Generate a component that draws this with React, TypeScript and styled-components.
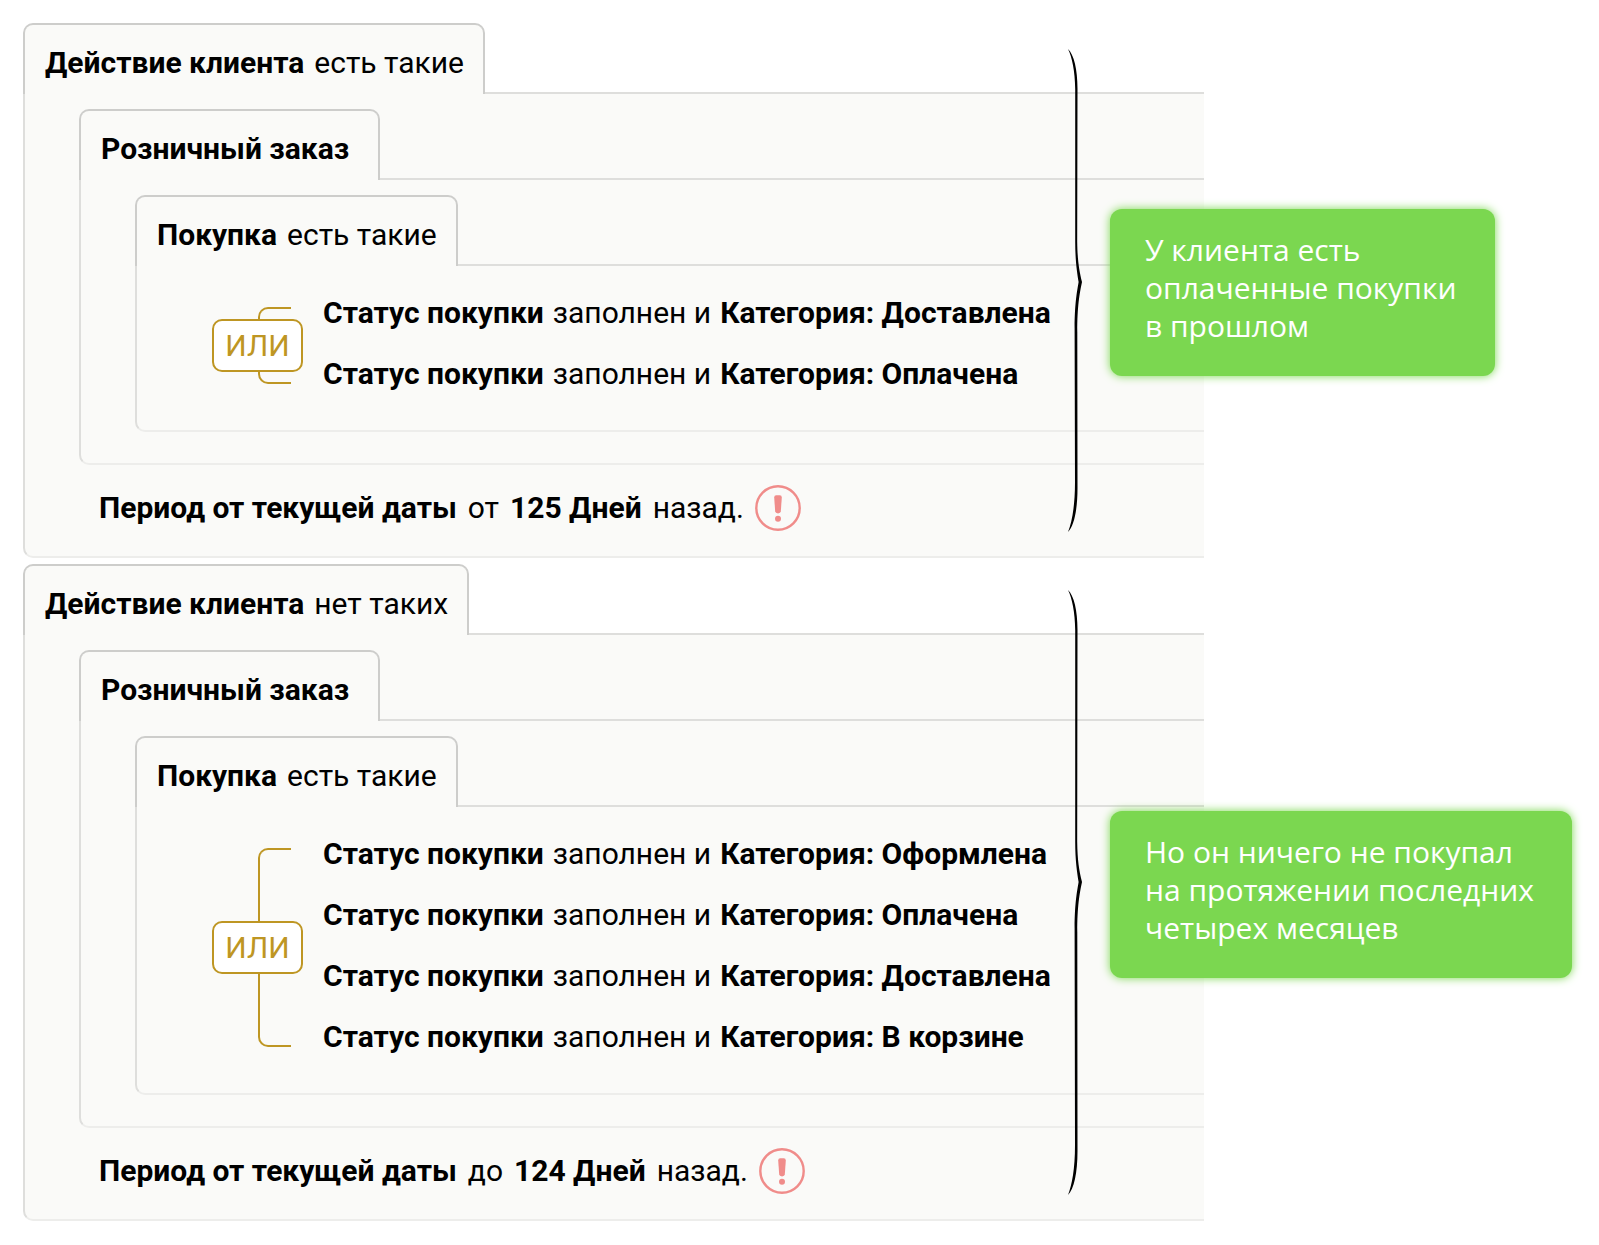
import React from "react";
import styled, { createGlobalStyle } from "styled-components";

const GlobalStyle = createGlobalStyle`
  *, *::before, *::after { box-sizing: border-box; }
  body {
    margin: 0;
    background: #fff;
    color: #000;
    font-family: Roboto, "Noto Sans", sans-serif;
    font-size: 30px;
    line-height: 38px;
  }
`;

const Page = styled.main`
  display: flex;
  flex-direction: column;
  gap: 6px;
  padding: 23px 0 24px 23px;
`;

const Section = styled.section`
  display: grid;
  grid-template-columns: minmax(0, 1fr) 136px 395px;
`;

const Panel = styled.div`
  grid-area: 1 / 1 / 2 / 3;
  min-width: 0;
`;

const Annotation = styled.aside`
  grid-area: 1 / 2 / 2 / 4;
  z-index: 2;
  display: flex;
  align-items: center;
  gap: 26px;
`;

const BraceSvg = styled.svg`
  flex: none;
  display: block;
  width: 16px;
  height: calc(100% - 52px);
`;

const Callout = styled.p`
  margin: 4px 0 0;
  padding: 22px 38px 31px 35px;
  border-radius: 12px;
  background: #7bd750;
  box-shadow: 0 0 10px #7bd750;
  color: #fff;
  font-family: "Open Sans", "Noto Sans", sans-serif;
  white-space: nowrap;
`;

const Tab = styled.header`
  position: relative;
  z-index: 1;
  display: flex;
  align-items: center;
  gap: 10px;
  width: fit-content;
  height: 71px;
  margin-bottom: -2px;
  padding: 6px 19px 0 20px;
  border: 2px solid #cdcdcb;
  border-bottom: 0;
  border-radius: 10px 10px 0 0;
  background: #fafaf8;
  white-space: nowrap;
`;

const Body = styled.div<{ $bottom: number }>`
  padding: 15px 0 ${p => p.$bottom}px 54px;
  border: solid #dededc;
  border-width: 2px 0 2px 2px;
  border-bottom-color: #ededeb;
  border-bottom-left-radius: 10px;
  background: #fafaf8;
`;

const Conditions = styled.div`
  display: flex;
  gap: 20px;
  padding: 2px 0 0 21px;
`;

const Connector = styled.div`
  display: grid;
  flex: none;
  width: 91px;
  padding: 24px 0 21px;
`;

const Bracket = styled.span`
  grid-area: 1 / 1;
  width: 33px;
  margin-left: 46px;
  border: solid #be9623;
  border-width: 2px 0 2px 2px;
  border-radius: 10px 0 0 10px;
`;

const Operator = styled.button`
  grid-area: 1 / 1;
  align-self: center;
  height: 53px;
  margin: -20px 0;
  padding: 0;
  border: 2px solid #be9623;
  border-radius: 10px;
  background: #fff;
  color: #be9623;
  font: inherit;
`;

const List = styled.ul`
  margin: 0;
  padding: 0;
  list-style: none;
`;

const Phrase = styled.li`
  display: flex;
  align-items: center;
  gap: 9px;
  height: 61px;
  padding-bottom: 2px;
  white-space: nowrap;
`;

const Period = styled.div`
  display: flex;
  align-items: center;
  gap: 11px;
  height: 86px;
  padding-left: 20px;
  white-space: nowrap;
`;

const WarningSvg = styled.svg`
  flex: none;
  width: 46px;
  height: 46px;
`;

function Warning() {
  return (
    <WarningSvg viewBox="0 0 46 46" role="img" aria-label="Внимание">
      <circle cx="23" cy="23" r="21.7" fill="none" stroke="#f08c8a" strokeWidth="2.4" />
      <path d="M19.2 12.6Q19.2 10.2 21.2 10.2H24.8Q26.8 10.2 26.8 12.6L25.8 26.6Q25.6 28.4 23 28.4Q20.4 28.4 20.2 26.6Z" fill="#f08c8a" />
      <circle cx="23" cy="33.8" r="3" fill="#f08c8a" />
    </WarningSvg>
  );
}

function Brace({ height: h }: { height: number }) {
  const t = Math.round(h * 0.483);
  const d = [
    `M0 0C6 6 9.5 20 9.5 40L9.2 ${t - 40}C9.5 ${t - 22} 11 ${t - 12} 14 ${t}`,
    `C11.5 ${t + 12} 9.3 ${t + 24} 9.3 ${t + 50}L9.5 ${h - 44}C9.5 ${h - 22} 6 ${h - 6} 0 ${h}`,
    `C4 ${h - 10} 7 ${h - 26} 7 ${h - 50}L6.6 ${t + 46}C6.8 ${t + 20} 9 ${t + 10} 10.6 ${t}`,
    `C9 ${t - 10} 7.2 ${t - 22} 7.2 ${t - 40}L7.2 40C7 22 4 8 0 0Z`,
  ].join("");
  return (
    <BraceSvg viewBox={`0 0 16 ${h}`} preserveAspectRatio="none" aria-hidden="true">
      <path d={d} />
    </BraceSvg>
  );
}

interface Rule {
  match: string;
  statuses: string[];
  preposition: string;
  days: string;
  note: string[];
  braceHeight: number;
}

const rules: Rule[] = [
  {
    match: "есть такие",
    statuses: ["Доставлена", "Оплачена"],
    preposition: "от",
    days: "125 Дней",
    note: ["У клиента есть", "оплаченные покупки", "в прошлом"],
    braceHeight: 483,
  },
  {
    match: "нет таких",
    statuses: ["Оформлена", "Оплачена", "Доставлена", "В корзине"],
    preposition: "до",
    days: "124 Дней",
    note: ["Но он ничего не покупал", "на протяжении последних", "четырех месяцев"],
    braceHeight: 605,
  },
];

function RuleSection({ rule }: { rule: Rule }) {
  return (
    <Section>
      <Panel>
        <Tab><b>Действие клиента</b><span>{rule.match}</span></Tab>
        <Body $bottom={5}>
          <Tab><b>Розничный заказ</b><span /></Tab>
          <Body $bottom={31}>
            <Tab><b>Покупка</b><span>есть такие</span></Tab>
            <Body $bottom={25}>
              <Conditions>
                <Connector>
                  <Bracket />
                  <Operator type="button">ИЛИ</Operator>
                </Connector>
                <List>
                  {rule.statuses.map(status => (
                    <Phrase key={status}>
                      <b>Статус покупки</b>
                      <span>заполнен и</span>
                      <b>Категория: {status}</b>
                    </Phrase>
                  ))}
                </List>
              </Conditions>
            </Body>
          </Body>
          <Period>
            <b>Период от текущей даты</b>
            <span>{rule.preposition}</span>
            <b>{rule.days}</b>
            <span>назад.</span>
            <Warning />
          </Period>
        </Body>
      </Panel>
      <Annotation>
        <Brace height={rule.braceHeight} />
        <Callout>
          {rule.note.map((line, i) => (
            <React.Fragment key={line}>{i > 0 && <br />}{line}</React.Fragment>
          ))}
        </Callout>
      </Annotation>
    </Section>
  );
}

export default function App() {
  return (
    <>
      <GlobalStyle />
      <Page>
        {rules.map(rule => <RuleSection key={rule.match} rule={rule} />)}
      </Page>
    </>
  );
}
